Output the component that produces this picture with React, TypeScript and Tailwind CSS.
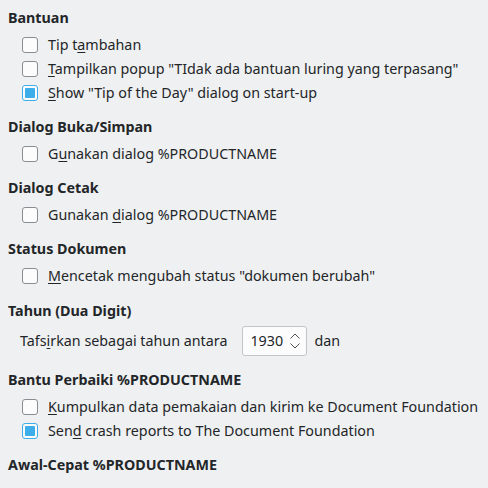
import React from 'react';

const font = { fontFamily: '"Noto Sans", "DejaVu Sans", sans-serif' };

type Item = { label: React.ReactNode; checked?: boolean };

const Checkbox = ({ checked }: { checked?: boolean }) =>
  checked ? (
    <span className="flex h-4 w-4 shrink-0 items-center justify-center rounded-[3px] border border-[#3daee9] bg-[#fcfcfc]">
      <span className="h-[10px] w-[10px] rounded-[1px] bg-[#3daee9]" />
    </span>
  ) : (
    <span className="h-4 w-4 shrink-0 rounded-[3px] border border-[#8a8d90] bg-[#fcfcfc]" />
  );

const Row = ({ item }: { item: Item }) => (
  <div className="flex h-6 items-center gap-[10px] pl-[22px]">
    <Checkbox checked={item.checked} />
    <span className="whitespace-nowrap">{item.label}</span>
  </div>
);

const Heading = ({ children }: { children: React.ReactNode }) => (
  <div className="flex h-5 items-center pl-2 font-bold">{children}</div>
);

const U = ({ children }: { children: React.ReactNode }) => (
  <span className="underline decoration-1 underline-offset-2">{children}</span>
);

export default function App() {
  return (
    <div className="h-[488px] w-[488px] overflow-hidden bg-[#eff0f1] pt-2 text-[14.3px] text-[#232629]" style={font}>
      <Heading>Bantuan</Heading>
      <div className="mt-[5px]">
        <Row item={{ label: <>Tip t<U>a</U>mbahan</> }} />
        <Row item={{ label: <><U>T</U>ampilkan popup "TIdak ada bantuan luring yang terpasang"</> }} />
        <Row item={{ label: <><U>S</U>how "Tip of the Day" dialog on start-up</>, checked: true }} />
      </div>

      <div className="mt-3">
        <Heading>Dialog Buka/Simpan</Heading>
        <div className="mt-[5px]">
          <Row item={{ label: <>G<U>u</U>nakan dialog %PRODUCTNAME</> }} />
        </div>
      </div>

      <div className="mt-3">
        <Heading>Dialog Cetak</Heading>
        <div className="mt-[5px]">
          <Row item={{ label: <>Gunakan <U>d</U>ialog %PRODUCTNAME</> }} />
        </div>
      </div>

      <div className="mt-3">
        <Heading>Status Dokumen</Heading>
        <div className="mt-[5px]">
          <Row item={{ label: <><U>M</U>encetak mengubah status "dokumen berubah"</> }} />
        </div>
      </div>

      <div className="mt-[13px]">
        <Heading>Tahun (Dua Digit)</Heading>
        <div className="mt-[5px] flex h-[30px] items-center pl-5">
          <span className="whitespace-nowrap">Tafs<U>i</U>rkan sebagai tahun antara</span>
          <div className="ml-[15px] flex h-[30px] w-[65px] shrink-0 items-center justify-between rounded-[3px] border border-[#c3c5c7] bg-[#fcfcfc] pl-[7px] pr-[5px]">
            <span>1930</span>
            <svg width="12" height="18" viewBox="0 0 12 18" fill="none" stroke="#4d5154" strokeWidth="1">
              <path d="M1.5 6.5 L6 2 L10.5 6.5" />
              <path d="M1.5 11.5 L6 16 L10.5 11.5" />
            </svg>
          </div>
          <span className="ml-[7px]">dan</span>
        </div>
      </div>

      <div className="mt-[14px]">
        <Heading>Bantu Perbaiki %PRODUCTNAME</Heading>
        <div className="mt-[5px]">
          <Row item={{ label: <><U>K</U>umpulkan data pemakaian dan kirim ke Document Foundation</> }} />
          <Row item={{ label: <>Sen<U>d</U> crash reports to The Document Foundation</>, checked: true }} />
        </div>
      </div>

      <div className="mt-3">
        <Heading>Awal-Cepat %PRODUCTNAME</Heading>
      </div>
    </div>
  );
}
